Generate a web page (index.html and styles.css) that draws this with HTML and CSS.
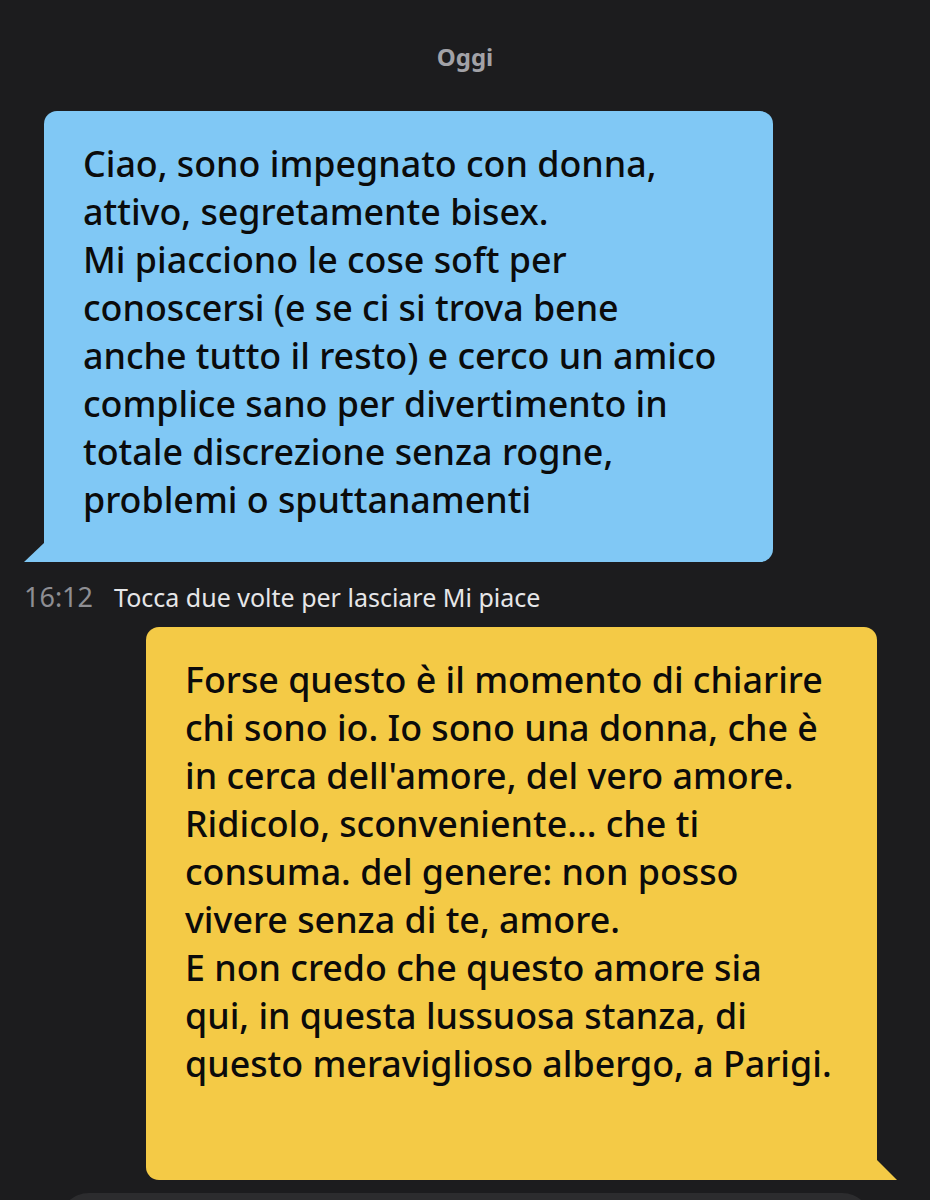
FILE: index.html
```html
<!DOCTYPE html>
<html lang="it">
<head>
<meta charset="utf-8">
<title>Chat</title>
<link rel="stylesheet" href="styles.css">
</head>
<body>
<div class="chat">
  <div class="day">Oggi</div>
  <div class="bubble bubble-in">
    <p class="text">Ciao, sono impegnato con donna,<br>attivo, segretamente bisex.<br>Mi piacciono le cose soft per<br>conoscersi (e se ci si trova bene<br>anche tutto il resto) e cerco un amico<br>complice sano per divertimento in<br>totale discrezione senza rogne,<br>problemi o sputtanamenti</p>
  </div>
  <div class="meta">
    <span class="time">16:12</span>
    <span class="hint">Tocca due volte per lasciare Mi piace</span>
  </div>
  <div class="bubble bubble-out">
    <p class="text">Forse questo è il momento di chiarire<br>chi sono io. Io sono una donna, che è<br>in cerca dell'amore, del vero amore.<br>Ridicolo, sconveniente... che ti<br>consuma. del genere: non posso<br>vivere senza di te, amore.<br>E non credo che questo amore sia<br>qui, in questa lussuosa stanza, di<br>questo meraviglioso albergo, a Parigi.</p>
  </div>
  <div class="composer"></div>
</div>
</body>
</html>
```

FILE: styles.css
```css
html, body {
  margin: 0;
  padding: 0;
  background: #1c1c1e;
  height: 1200px;
  overflow: hidden;
}

.chat {
  display: flex;
  flex-direction: column;
  font-family: "Noto Sans", "Open Sans", sans-serif;
}

.day {
  padding-top: 40px;
  height: 34px;
  line-height: 34px;
  text-align: center;
  font-size: 24px;
  font-weight: 700;
  color: #a2a2a7;
}

.bubble {
  position: relative;
  box-sizing: border-box;
  padding-left: 39px;
}

.text {
  margin: 0;
  font-size: 35.8px;
  font-weight: 500;
  line-height: 48px;
  color: #0b0b0b;
  white-space: nowrap;
}

.bubble-in {
  margin: 37px 0 0 44px;
  width: 729px;
  height: 451px;
  padding-top: 28px;
  background: #80c8f5;
  border-radius: 13px 13px 13px 0;
}

.bubble-in::after {
  content: "";
  position: absolute;
  left: -20px;
  bottom: 0;
  width: 20px;
  height: 19px;
  background: #80c8f5;
  clip-path: polygon(100% 0, 100% 100%, 0 100%);
}

.meta {
  display: flex;
  align-items: center;
  gap: 20px;
  margin: 22px 0 0 24px;
  height: 26px;
  line-height: 26px;
  font-size: 25px;
}

.time {
  min-width: 70px;
  font-size: 27px;
  color: #8e8e93;
}

.hint {
  color: #e6e6e8;
}

.bubble-out {
  margin: 17px 0 0 146px;
  width: 731px;
  height: 553px;
  padding-top: 28px;
  background: #f4ca46;
  border-radius: 13px 13px 0 13px;
}

.bubble-out::after {
  content: "";
  position: absolute;
  right: -20px;
  bottom: 0;
  width: 20px;
  height: 20px;
  background: #f4ca46;
  clip-path: polygon(0 0, 100% 100%, 0 100%);
}

.composer {
  margin: 13px 58px 0 59px;
  height: 60px;
  border-radius: 30px;
  background: #2c2c2e;
}
```
